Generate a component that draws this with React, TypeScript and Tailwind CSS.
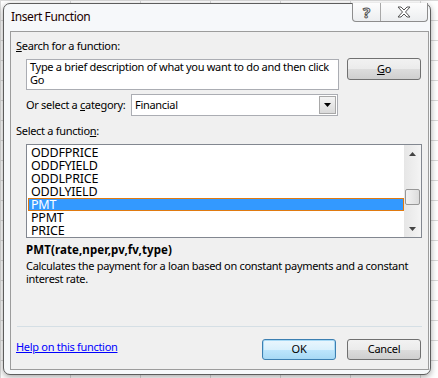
import React from 'react';

const functions = ['ODDFPRICE', 'ODDFYIELD', 'ODDLPRICE', 'ODDLYIELD', 'PMT', 'PPMT', 'PRICE'];

const InsertFunction = () => {
    return (
        <div className="w-[438px] h-[378px] bg-white pt-[3px] pl-[3px] font-['Noto_Sans',sans-serif] text-[11px] tracking-[-0.3px] text-black bg-[linear-gradient(90deg,#d9d9d9_1px,transparent_1px),linear-gradient(#d9d9d9_1px,transparent_1px)] bg-[size:70px_20px]">
            {/* Window frame */}
            <div className="w-[428px] h-[372px] rounded-[7px] border border-[#5d5d5d] bg-[#f6f8fa] shadow-[0_2px_6px_rgba(0,0,0,0.35)] flex flex-col">
                {/* Title bar */}
                <div className="h-[27px] flex items-start">
                    <span className="ml-[7px] mt-[4px] text-[12px] tracking-[-0.4px] text-[#1a0000]">Insert Function</span>
                    <div className="ml-auto mr-[2px] mt-[-1px] h-[19px] flex border border-[#8d8d8d] border-t-0 rounded-b-[4px] bg-[linear-gradient(#fdfdfd,#eceef0)]">
                        <div className="w-[28px] flex items-center justify-center border-r border-[#a8a8a8] text-[15px] font-bold tracking-normal text-white [-webkit-text-stroke:1px_#555]">?</div>
                        <div className="w-[46px] flex items-center justify-center">
                            <svg width="16" height="12" viewBox="0 0 16 12">
                                <path d="M2 1h3l3 3 3-3h3l-4.5 5 4.5 5h-3l-3-3-3 3H2l4.5-5z" fill="#fff" stroke="#555" strokeWidth="1" strokeLinejoin="round" />
                            </svg>
                        </div>
                    </div>
                </div>

                {/* Client area */}
                <div className="ml-[6px] mr-[1px] h-[339px] border border-[#9c9c9c] bg-[#f0f0f0] flex flex-col px-[5px]">
                    <div className="mt-[6px] h-[16px] leading-[16px]"><u>S</u>earch for a function:</div>

                    <div className="mt-[5px] flex items-start">
                        <div className="ml-[10px] w-[313px] h-[31px] border border-[#abadb3] bg-white px-[3px] pt-[1px] leading-[12.5px]">
                            Type a brief description of what you want to do and then click Go
                        </div>
                        <button className="ml-[8px] mt-[-1px] w-[74px] h-[22px] rounded-[3px] border border-[#707070] bg-[linear-gradient(#f2f2f2_0%,#ebebeb_50%,#dddddd_50%,#cfcfcf_100%)]">
                            <u>G</u>o
                        </button>
                    </div>

                    <div className="mt-[4px] ml-[10px] flex items-center h-[22px]">
                        <span className="w-[105px] whitespace-nowrap">Or select a <u>c</u>ategory:</span>
                        <div className="w-[207px] h-[22px] border border-[#abadb3] bg-white flex items-center pl-[3px]">
                            <span className="flex-1">Financial</span>
                            <div className="mr-[1px] w-[17px] h-[18px] border border-[#a8a8a8] bg-[linear-gradient(#f4f4f4,#dadada)] flex items-center justify-center">
                                <svg width="7" height="4" viewBox="0 0 7 4"><path d="M0 0h7L3.5 4z" fill="#000" /></svg>
                            </div>
                        </div>
                    </div>

                    <div className="mt-[7px] h-[16px] leading-[16px]">Select a functio<u>n</u>:</div>

                    <div className="mt-[5px] ml-[10px] w-[396px] h-[94px] border border-[#828790] bg-white flex">
                        <div className="flex-1 flex flex-col pt-[1px] pl-[1px] text-[12.5px] tracking-[-0.2px]">
                            {functions.map((f) => (
                                <div
                                    key={f}
                                    className={
                                        f === 'PMT'
                                            ? 'h-[13px] leading-[11px] pl-[2px] bg-[#3399ff] border border-[#e07a10] text-white'
                                            : 'h-[13px] pt-[1px] leading-[12px] pl-[3px]'
                                    }
                                >
                                    {f}
                                </div>
                            ))}
                        </div>
                        {/* Scrollbar */}
                        <div className="w-[17px] bg-[linear-gradient(90deg,#e6e6e6,#f4f4f4)] flex flex-col items-center">
                            <div className="h-[17px] flex items-center justify-center">
                                <svg width="7" height="4" viewBox="0 0 7 4"><path d="M3.5 0L7 4H0z" fill="#444" /></svg>
                            </div>
                            <div className="mt-[27px] w-[15px] h-[16px] rounded-[2px] border border-[#979797] bg-[linear-gradient(90deg,#f3f3f3,#dcdcdc)]" />
                            <div className="mt-auto h-[17px] flex items-center justify-center">
                                <svg width="7" height="4" viewBox="0 0 7 4"><path d="M0 0h7L3.5 4z" fill="#444" /></svg>
                            </div>
                        </div>
                    </div>

                    <div className="mt-[4px] ml-[10px] font-bold text-[11.5px] tracking-[0.1px] h-[16px] leading-[16px]">PMT(rate,nper,pv,fv,type)</div>
                    <div className="mt-[2px] ml-[10px] leading-[12.7px]">
                        Calculates the payment for a loan based on constant payments and a constant interest rate.
                    </div>

                    <div className="mt-auto mx-[1px] h-px bg-[#d5dfe5]" />

                    <div className="h-[42px] flex items-center">
                        <a className="text-[#0000ff] underline -mt-[1px]">Help on this function</a>
                        <button className="ml-auto mt-[2px] w-[74px] h-[21px] rounded-[3px] border border-[#3c7fb1] shadow-[inset_0_0_0_1px_#a7d9f5] bg-[linear-gradient(#eaf6fd_0%,#d9f0fc_50%,#bee6fd_50%,#a7d9f5_100%)]">
                            OK
                        </button>
                        <button className="ml-[11px] mt-[2px] mr-[2px] w-[74px] h-[21px] rounded-[3px] border border-[#707070] bg-[linear-gradient(#f2f2f2_0%,#ebebeb_50%,#dddddd_50%,#cfcfcf_100%)]">
                            Cancel
                        </button>
                    </div>
                </div>
            </div>
        </div>
    );
};

export default function App() {
    return <InsertFunction />;
}
